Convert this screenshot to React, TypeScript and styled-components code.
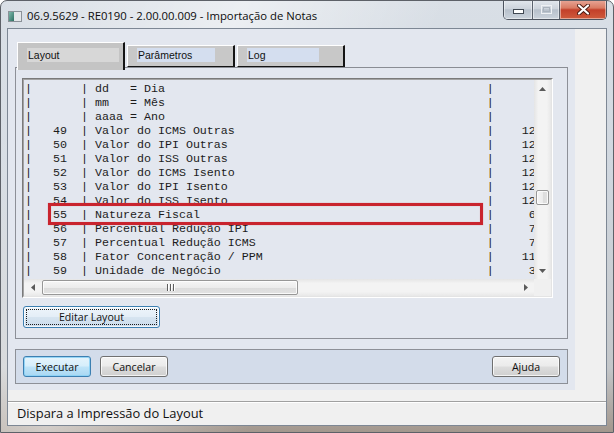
import React from "react";
import styled, { createGlobalStyle } from "styled-components";

const GlobalStyle = createGlobalStyle`
  html, body {
    margin: 0;
    padding: 0;
  }
  body {
    background: #ffffff;
    font-family: "Open Sans", "Liberation Sans", sans-serif;
  }
  * {
    box-sizing: border-box;
  }
`;

const Window = styled.div`
  width: 614px;
  height: 433px;
  display: flex;
  flex-direction: column;
  padding: 0 6px 6px 6px;
  border: 1px solid #5d6168;
  border-radius: 7px 7px 0 0;
  overflow: hidden;
  background: linear-gradient(
      115deg,
      rgba(255, 255, 255, 0) 0%,
      rgba(255, 255, 255, 0.5) 30%,
      rgba(255, 255, 255, 0) 55%
    ),
    linear-gradient(180deg, #d9dfe6 0%, #d0d7df 40%, #c4c7ca 85%, #a3978d 100%);
`;

const TitleBar = styled.div`
  height: 27px;
  display: flex;
  align-items: center;
  flex-shrink: 0;
`;

const AppIcon = styled.div`
  width: 14px;
  height: 11px;
  margin: 3px 0 0 1px;
  display: flex;
`;

const TitleText = styled.span`
  margin: 2px 0 0 5px;
  font-family: "Open Sans", "Liberation Sans", sans-serif;
  font-size: 11.3px;
  color: #0c0c0c;
  white-space: nowrap;
`;

const CaptionGroup = styled.div`
  margin-left: auto;
  align-self: flex-start;
  display: flex;
  height: 20px;
  margin-top: -1px;
  border: 1px solid #4c535e;
  border-top: none;
  border-radius: 0 0 5px 5px;
  overflow: hidden;
`;

const CaptionButton = styled.div<{ $w: number; $close?: boolean }>`
  width: ${(p) => p.$w}px;
  height: 100%;
  display: flex;
  align-items: center;
  justify-content: center;
  border-left: ${(p) => (p.$w === 27 || p.$close ? "1px solid #5b636e" : "none")};
  box-shadow: inset 0 0 0 1px rgba(255, 255, 255, 0.45);
  background: ${(p) =>
    p.$close
      ? "linear-gradient(180deg, #e8a899 0%, #d97b63 42%, #c3402a 52%, #cf5b3c 100%)"
      : "linear-gradient(180deg, #e3e8ee 0%, #cdd4dc 45%, #b7c0cb 52%, #cbd3dc 100%)"};
`;

const Client = styled.div`
  flex: 1;
  display: flex;
  flex-direction: column;
  border: 1px solid #7d8794;
  background: #f0f0f0;
`;

const MainRow = styled.div`
  height: 361px;
  display: flex;
  flex-shrink: 0;
`;

const ContentPanel = styled.div`
  width: 567px;
  height: 100%;
  padding: 13px 0 0 7px;
  background: #e3e7ef;
  display: flex;
  flex-direction: column;
`;

const TabStrip = styled.div`
  height: 25px;
  display: flex;
  align-items: flex-end;
  padding-left: 2px;
  gap: 2px;
  position: relative;
  z-index: 1;
`;

const Tab = styled.div<{ $active?: boolean }>`
  width: 108px;
  height: ${(p) => (p.$active ? 28 : 22)}px;
  margin-bottom: ${(p) => (p.$active ? -3 : 0)}px;
  padding: ${(p) => (p.$active ? 5 : 2)}px 0 0 9px;
  background: ${(p) => (p.$active ? "#c4c4c4" : "#c8c8c8")};
  border-top: 1px solid #ffffff;
  border-left: 1px solid #ffffff;
  border-right: 2px solid #141414;
  border-bottom: ${(p) => (p.$active ? "none" : "1px solid #141414")};
`;

const TabLabel = styled.div<{ $w: number; $active?: boolean }>`
  width: ${(p) => p.$w}px;
  height: 14px;
  padding-left: 1px;
  line-height: 14px;
  background: ${(p) => (p.$active ? "#d7d7d7" : "#d4deef")};
  font-family: "Liberation Sans", Arial, sans-serif;
  font-size: 10.5px;
  color: #111111;
  white-space: nowrap;
`;

const TabPage = styled.div`
  width: 553px;
  height: 272px;
  border: 1px solid #8d9097;
  border-top-color: #8a8d94;
  padding: 10px 0 0 6px;
`;

const ListOuter = styled.div`
  width: 531px;
  height: 220px;
  border: 1px solid;
  border-color: #7a7a7a #ffffff #ffffff #7a7a7a;
`;

const ListInner = styled.div`
  width: 100%;
  height: 100%;
  border: 1px solid;
  border-color: #a3a3a3 #e4e4e4 #e4e4e4 #a3a3a3;
  display: grid;
  grid-template-columns: 510px 17px;
  grid-template-rows: 199px 17px;
`;

const TextArea = styled.div`
  position: relative;
  overflow: hidden;
  padding: 2px 0 0 1px;
  background: #e3e7ef;
`;

const Line = styled.div`
  height: 14px;
  line-height: 14px;
  font-family: "Liberation Mono", "Courier New", monospace;
  font-size: 11.667px;
  color: #1c1c1c;
  white-space: pre;
`;

const Highlight = styled.div`
  position: absolute;
  left: 24px;
  top: 123px;
  width: 435px;
  height: 22px;
  border: 3px solid #c9242e;
  box-shadow: 0 0 1px rgba(201, 36, 46, 0.45), inset 0 0 1px rgba(201, 36, 46, 0.45);
`;

const VScroll = styled.div`
  display: flex;
  flex-direction: column;
  background: linear-gradient(90deg, #e5e5e5 0%, #f3f3f3 25%, #f3f3f3 75%, #e8e8e8 100%);
`;

const HScroll = styled.div`
  display: flex;
  background: linear-gradient(180deg, #e5e5e5 0%, #f3f3f3 25%, #f3f3f3 75%, #e8e8e8 100%);
`;

const Corner = styled.div`
  background: #f0f0f0;
`;

const ArrowBox = styled.div`
  width: 17px;
  height: 17px;
  flex-shrink: 0;
  display: flex;
  align-items: center;
  justify-content: center;
`;

const VThumb = styled.div`
  margin: 93px 0 0 2px;
  width: 13px;
  height: 15px;
  border: 1px solid #979797;
  border-radius: 2px;
  background: linear-gradient(90deg, #f6f6f6 0%, #ececec 50%, #dcdcdc 51%, #e2e2e2 100%);
  box-shadow: inset 0 0 0 1px rgba(255, 255, 255, 0.8);
`;

const HThumb = styled.div`
  margin: 1px 0 0 1px;
  width: 256px;
  height: 15px;
  border: 1px solid #979797;
  border-radius: 2px;
  display: flex;
  align-items: center;
  justify-content: center;
  gap: 2px;
  background: linear-gradient(180deg, #f6f6f6 0%, #ececec 50%, #dcdcdc 51%, #e2e2e2 100%);
  box-shadow: inset 0 0 0 1px rgba(255, 255, 255, 0.8);
`;

const Grip = styled.span`
  width: 1px;
  height: 7px;
  background: #5d5d5d;
  box-shadow: 1px 0 0 #ffffff;
`;

const Spring = styled.div`
  flex: 1;
`;

const PushButton = styled.button<{ $kind?: "default" | "focused" }>`
  height: ${(p) => (p.$kind === "focused" ? 22 : 21)}px;
  width: ${(p) => (p.$kind === "focused" ? 137 : 68)}px;
  padding: 0;
  font-family: "Open Sans", "Liberation Sans", sans-serif;
  font-size: 10.6px;
  color: #101010;
  border-radius: 3px;
  border: 1px solid ${(p) => (p.$kind ? "#3c7fb1" : "#707070")};
  background: ${(p) =>
    p.$kind === "default"
      ? "linear-gradient(180deg, #e5f4fc 0%, #d6eefb 48%, #bfe4f8 52%, #a9d8f3 100%)"
      : p.$kind === "focused"
      ? "linear-gradient(180deg, #eef5fb 0%, #e4eef7 48%, #d6e4f0 52%, #cbdcec 100%)"
      : "linear-gradient(180deg, #f3f3f3 0%, #ebebeb 48%, #dddddd 52%, #cfcfcf 100%)"};
  box-shadow: inset 0 0 0 1px
    ${(p) => (p.$kind === "default" ? "rgba(140, 210, 245, 0.9)" : "rgba(255, 255, 255, 0.75)")};
  outline: ${(p) => (p.$kind === "focused" ? "1px dotted #1b1b1b" : "none")};
  outline-offset: -4px;
  cursor: default;
`;

const EditRow = styled.div`
  margin: 6px 0 0 1px;
`;

const ButtonBar = styled.div`
  margin-top: 10px;
  width: 553px;
  height: 35px;
  border: 1px solid #8d9097;
  background: #d3dcea;
  display: flex;
  padding: 6px 7px 0 7px;
  gap: 9px;
`;

const RightGap = styled.div`
  flex: 1;
  background: #f0f0f0;
`;

const BottomGap = styled.div`
  height: 11px;
  flex-shrink: 0;
`;

const StatusBar = styled.div`
  flex: 1;
  display: flex;
  align-items: center;
  padding: 0 0 1px 9px;
  border-top: 1px solid #a0a0a0;
  box-shadow: inset 0 1px 0 #ffffff;
  font-family: "Open Sans", "Liberation Sans", sans-serif;
  font-size: 12.9px;
  color: #111111;
`;

type Row = { num: string; text: string; val: string };

const rows: Row[] = [
  { num: "", text: "dd   = Dia", val: "" },
  { num: "", text: "mm   = Mês", val: "" },
  { num: "", text: "aaaa = Ano", val: "" },
  { num: "49", text: "Valor do ICMS Outras", val: "12" },
  { num: "50", text: "Valor do IPI Outras", val: "12" },
  { num: "51", text: "Valor do ISS Outras", val: "12" },
  { num: "52", text: "Valor do ICMS Isento", val: "12" },
  { num: "53", text: "Valor do IPI Isento", val: "12" },
  { num: "54", text: "Valor do ISS Isento", val: "12" },
  { num: "55", text: "Natureza Fiscal", val: "6" },
  { num: "56", text: "Percentual Redução IPI", val: "7" },
  { num: "57", text: "Percentual Redução ICMS", val: "7" },
  { num: "58", text: "Fator Concentração / PPM", val: "11" },
  { num: "59", text: "Unidade de Negócio", val: "3" },
];

// the last column stays where the list clips it, as in the layout listing
function formatRow(r: Row) {
  const head = "|   " + r.num.padStart(2, " ") + "  | " + r.text.padEnd(56, " ") + "|";
  return r.val ? head + r.val.padStart(6, " ") : head;
}

const Arrow = ({ dir }: { dir: "up" | "down" | "left" | "right" }) => {
  const pts = {
    up: "0,4 3.5,0 7,4",
    down: "0,0 3.5,4 7,0",
    left: "4,0 0,3.5 4,7",
    right: "0,0 4,3.5 0,7",
  }[dir];
  const vertical = dir === "up" || dir === "down";
  return (
    <svg width={vertical ? 7 : 4} height={vertical ? 4 : 7}>
      <polygon points={pts} fill="#5a5a5a" />
    </svg>
  );
};

export default function App() {
  return (
    <>
      <GlobalStyle />
      <Window>
        <TitleBar>
          <AppIcon>
            <svg width="14" height="11">
              <defs>
                <linearGradient id="appg" x1="0" x2="1" y1="0" y2="1">
                  <stop offset="0" stopColor="#7fb9ab" />
                  <stop offset="1" stopColor="#2d6f62" />
                </linearGradient>
              </defs>
              <rect x="0.5" y="0.5" width="13" height="10" fill="#e4e7ea" stroke="#8b9198" />
              <rect x="1" y="1" width="5" height="9" fill="url(#appg)" />
            </svg>
          </AppIcon>
          <TitleText>06.9.5629 - RE0190 - 2.00.00.009 - Importação de Notas</TitleText>
          <CaptionGroup>
            <CaptionButton $w={28}>
              <svg width="11" height="6" style={{ marginTop: 5 }}>
                <rect x="0.5" y="0.5" width="10" height="4" fill="#ffffff" stroke="#404852" />
              </svg>
            </CaptionButton>
            <CaptionButton $w={27}>
              <svg width="11" height="9">
                <rect x="0.5" y="0.5" width="10" height="8" fill="none" stroke="#eef1f4" strokeWidth="1" />
                <rect x="2.5" y="2.5" width="6" height="4" fill="none" stroke="#aab3bd" />
              </svg>
            </CaptionButton>
            <CaptionButton $w={47} $close>
              <svg width="13" height="11">
                <path d="M2 1.5 L11 9.5 M11 1.5 L2 9.5" stroke="#4a1b12" strokeWidth="4" strokeLinecap="round" />
                <path d="M2 1.5 L11 9.5 M11 1.5 L2 9.5" stroke="#ffffff" strokeWidth="2.2" strokeLinecap="round" />
              </svg>
            </CaptionButton>
          </CaptionGroup>
        </TitleBar>
        <Client>
          <MainRow>
            <ContentPanel>
              <TabStrip>
                <Tab $active>
                  <TabLabel $w={92} $active>
                    Layout
                  </TabLabel>
                </Tab>
                <Tab>
                  <TabLabel $w={78}>Parâmetros</TabLabel>
                </Tab>
                <Tab>
                  <TabLabel $w={72}>Log</TabLabel>
                </Tab>
              </TabStrip>
              <TabPage>
                <ListOuter>
                  <ListInner>
                    <TextArea>
                      {rows.map((r, i) => (
                        <Line key={i}>{formatRow(r)}</Line>
                      ))}
                      <Highlight />
                    </TextArea>
                    <VScroll>
                      <ArrowBox>
                        <Arrow dir="up" />
                      </ArrowBox>
                      <VThumb />
                      <Spring />
                      <ArrowBox>
                        <Arrow dir="down" />
                      </ArrowBox>
                    </VScroll>
                    <HScroll>
                      <ArrowBox>
                        <Arrow dir="left" />
                      </ArrowBox>
                      <HThumb>
                        <Grip />
                        <Grip />
                        <Grip />
                      </HThumb>
                      <Spring />
                      <ArrowBox>
                        <Arrow dir="right" />
                      </ArrowBox>
                    </HScroll>
                    <Corner />
                  </ListInner>
                </ListOuter>
                <EditRow>
                  <PushButton $kind="focused">Editar Layout</PushButton>
                </EditRow>
              </TabPage>
              <ButtonBar>
                <PushButton $kind="default">Executar</PushButton>
                <PushButton>Cancelar</PushButton>
                <Spring />
                <PushButton>Ajuda</PushButton>
              </ButtonBar>
            </ContentPanel>
            <RightGap />
          </MainRow>
          <BottomGap />
          <StatusBar>Dispara a Impressão do Layout</StatusBar>
        </Client>
      </Window>
    </>
  );
}
